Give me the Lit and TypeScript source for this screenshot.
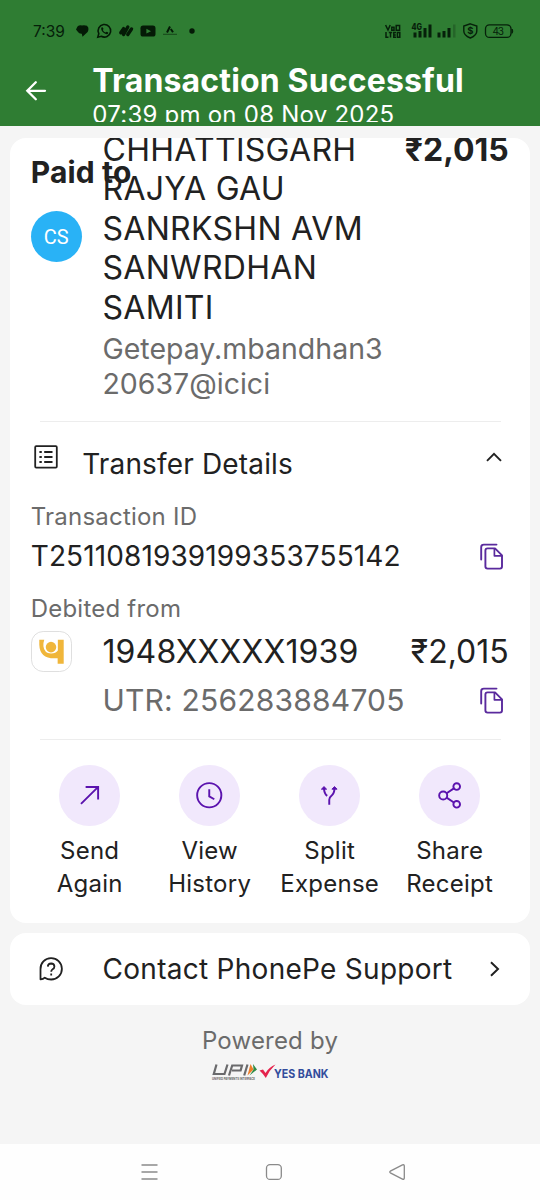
import { LitElement, html, svg, css } from "lit";
import { customElement } from "lit/decorators.js";

const copyIcon = html`<svg class="copy" width="24" height="28" viewBox="0 0 24 28" fill="none" stroke="#5a2a9d" stroke-width="1.9" stroke-linecap="round" stroke-linejoin="round">
  <path d="M1.2 16.500V4.200Q1.200 1.600 3.800 1.600H16.500"/>
  <path d="M7.600 5.400H15L22 12.400V23.600Q22 25.600 20 25.600H7.600Q5.400 25.600 5.400 23.600V7.400Q5.400 5.400 7.600 5.400Z"/>
  <path d="M14.400 5.800V12.800H21.600" stroke-width="1.7"/>
</svg>`;

const actions = [
  {
    lines: ["Send", "Again"],
    icon: svg`<path d="M21.800 38.600L38.600 22M26.400 21.800H38.800V34.200"/>`,
  },
  {
    lines: ["View", "History"],
    icon: svg`<circle cx="30" cy="30" r="12"/><path d="M30 24V31.200L35 34"/>`,
  },
  {
    lines: ["Split", "Expense"],
    icon: svg`<path d="M30 39.500V34.500Q30 32 32.400 30.200Q35.200 28 35.200 22.500M28 30.600Q24.800 28.500 24.800 22.500"/><path fill="#5b13ae" stroke-width=".9" d="M22.200 24L24.800 21.400L27.400 24ZM32.600 24L35.200 21.400L37.800 24Z"/>`,
  },
  {
    lines: ["Share", "Receipt"],
    icon: svg`<circle cx="24" cy="30.200" r="4"/><circle cx="37.400" cy="21.400" r="3.300"/><circle cx="37.400" cy="39" r="3.300"/><path d="M27.400 28L34.600 23.200M27.400 32.400L34.600 37.200"/>`,
  },
];

@customElement("app-root")
export class AppRoot extends LitElement {
  static styles = css`
    :host { display: block; font-family: Inter, Roboto, sans-serif; color: #212121; }
    * { box-sizing: border-box; }
    svg { display: block; flex: none; }
    .screen { width: 540px; height: 1200px; background: #f5f5f5; display: flex; flex-direction: column; overflow: hidden; white-space: nowrap; }
    .head { height: 126px; background: #2f7d33; flex: none; display: flex; flex-direction: column; color: #fff; }
    .status { height: 62px; padding: 20px 26px 0 33px; display: flex; justify-content: space-between; color: #06200a; }
    .status-left, .status-right { display: flex; height: 22px; align-items: center; }
    .time { font-size: 15.5px; width: 43px; }
    .bar { display: flex; padding-left: 25px; height: 60px; overflow: hidden; }
    .back { margin-top: 18px; }
    .titles { padding-left: 45.3px; }
    .title { font-size: 32px; line-height: 36px; font-weight: 700; letter-spacing: 0.15px; margin-top: 1px; }
    .date { font-size: 24px; line-height: 34px; margin-top: -1.5px; letter-spacing: 0.24px; }
    .card { background: #fff; border-radius: 16px; margin: 0 10px; overflow: hidden; flex: none; }
    .main { margin-top: 12px; height: 785px; padding: 0 21.3px 0 20.7px; display: flex; flex-direction: column; }
    .payee { display: grid; grid-template-columns: 71.8px 1fr auto; height: 283px; flex: none; }
    .paid { font-size: 30px; line-height: 36px; font-weight: 700; width: 72px; margin-top: 16px; letter-spacing: 0.15px; }
    .avatar { width: 51px; height: 51px; border-radius: 50%; background: #29b2f6; color: #fff; font: 20px Roboto, sans-serif; display: flex; align-items: center; justify-content: center; margin-top: 21px; }
    .who { margin-top: -8.5px; }
    .name { font-size: 32px; line-height: 39.5px; letter-spacing: 0.3px; }
    .vpa { font-size: 28.5px; line-height: 34.5px; color: #6b6b6b; margin-top: 5px; }
    .amount { font-size: 32px; line-height: 39.5px; font-weight: 700; margin-top: -8.5px; }
    .rule { height: 1px; background: #ededed; margin: 0 8px 0 9px; flex: none; }
    .row { display: flex; justify-content: space-between; align-items: center; }
    .section { height: 81px; align-items: flex-start; padding: 23px 0 0 3px; flex: none; }
    .section-name { font-size: 28px; line-height: 36px; flex: 1; margin: 1px 0 0 24.5px; letter-spacing: 0.16px; }
    .up { margin: 6.5px 7px 0 0; }
    .label { font-size: 24px; line-height: 28px; color: #6b6b6b; letter-spacing: 0.22px; }
    .txn { font-size: 28px; line-height: 36px; height: 50px; letter-spacing: 0.12px; }
    .copy { margin: 1px 4.700px 0 0; }
    .debited { margin-top: 14px; }
    .account { font-size: 32px; line-height: 40px; height: 44px; margin-top: 7px; }
    .bank { width: 71.8px; margin-top: -2px; }
    .number { flex: 1; letter-spacing: 0.12px; }
    .utr { font-size: 30px; line-height: 40px; color: #6b6b6b; padding-left: 71.8px; height: 52px; margin-bottom: 13px; letter-spacing: 0.2px; }
    .actions { display: grid; grid-template-columns: repeat(4, 120px); margin: 25px -1px 0 -1px; }
    .action { display: flex; flex-direction: column; align-items: center; font-size: 24px; line-height: 33px; text-align: center; letter-spacing: 0.25px; }
    .round { width: 60.5px; height: 60.5px; border-radius: 50%; background: #f1e8fc; margin-bottom: 8.5px; }
    .support { height: 72px; margin-top: 10px; padding: 0 28px 0 29px; display: flex; align-items: center; }
    .support-text { font-size: 28px; line-height: 36px; margin: 0 0 0 39.500px; flex: 1; letter-spacing: 0.28px; }
    .powered { font-size: 24px; line-height: 30px; color: #6b6b6b; text-align: center; margin-top: 21px; letter-spacing: 0.2px; }
    .logos { display: flex; justify-content: center; margin-top: 4px; }
    .nav { margin-top: auto; height: 56px; background: #fefefe; flex: none; display: flex; justify-content: center; align-items: center; }
  `;

  render() {
    return html`<div class="screen">
      <div class="head">
        <div class="status">
          <div class="status-left">
            <div class="time">7:39</div>
            <svg width="124" height="22" viewBox="0 0 124 22" fill="#041a06">
              <path d="M1.500 6.500Q3 5 6 5.400Q9 5 11 5.800Q13 7.500 12.400 10Q12 12.500 10 13.600L6.500 16.800L5.800 13.800Q3 14 2 12L0 9.500Z"/>
              <path fill="none" stroke="#041a06" stroke-width="1.600" d="M21.800 17.200L22.800 13.700A6.300 6.300 0 1 1 25.300 16.300Z"/>
              <path d="M25.400 7.600Q26.600 6.800 27.400 8.600Q27.600 9.400 26.800 10Q27.800 12 29.700 12.600Q30.600 11.400 31.400 12Q33 12.800 32 13.800Q30.400 15 27.600 12.800Q24.400 10.200 25.400 7.600Z"/>
              <path fill="none" stroke="#041a06" stroke-width="3.400" stroke-linecap="round" d="M44.800 12.800L47.600 8.600M47.600 14.500L51.800 7M51.800 14.500L55.500 9"/>
              <rect x="64.500" y="5.600" width="15" height="11" rx="2.600"/>
              <path fill="#2f7d33" d="M70.400 8.800L75 11.200L70.400 13.600Z"/>
              <path fill="none" stroke="#041a06" stroke-width="2" d="M91 12.500L94 6.500M94.800 9L97 12.300"/>
              <path fill="none" stroke="#041a06" stroke-width=".8" opacity=".7" d="M87 14.300H101"/>
              <circle cx="116" cy="11" r="2.700"/>
            </svg>
          </div>
          <div class="status-right">
            <svg width="129" height="22" viewBox="0 0 129 22" fill="#06200a" font-family="Inter" font-weight="800">
              <g fill="none" stroke="#06200a" stroke-width="1.500"><path d="M.6 5L3 10L5.200 5M6.800 7.200H9V10.200H6.800ZM11.200 5.400H14.600V10.200H11.200ZM1 12V17.200H3.500M3.800 12.600H7.200M5.500 12.600V17.500M11 12.600H8.800V17.200H11M8.800 14.900H10.800M12.400 12.600H14.800V17.200H12.400Z"/></g>
              <text x="26.500" y="9.800" font-size="8.600" textLength="10.500" lengthAdjust="spacingAndGlyphs">4G</text>
              <path d="M28.500 12.500h3v5h-3zM33.500 11h3v6.500h-3zM38.500 8h3v9.500h-3zM43.500 4.500h3v13h-3zM52.500 12.500h3v5h-3zM57.500 11h3v6.500h-3zM62.500 8h3v9.500h-3z"/>
              <path opacity=".25" d="M68 4.500h2.500v13H68z"/>
              <path fill="none" stroke="#06200a" stroke-width="1.400" d="M85.300 3.800L91.800 6V11Q91.800 15.500 85.300 18Q78.800 15.500 78.800 11V6Z"/>
              <text x="82.200" y="14.300" font-size="9.500" font-weight="700">$</text>
              <rect x="100.500" y="4.800" width="25.500" height="12.600" rx="4" fill="none" stroke="#06200a" stroke-width="1.300"/>
              <path d="M127 9Q128.600 11 127 13.300Z" stroke="#06200a"/>
              <text x="107.500" y="14.700" font-size="10" font-weight="400" textLength="11.500">43</text>
            </svg>
          </div>
        </div>
        <div class="bar">
          <svg class="back" width="22" height="22" viewBox="0 0 22 22" fill="none" stroke="#fff" stroke-width="2.300" stroke-linecap="round"><path d="M20 10.800H2.500M10.800 2.300L2.300 10.800L10.800 19.300"/></svg>
          <div class="titles">
            <div class="title">Transaction Successful</div>
            <div class="date">07:39 pm on 08 Nov 2025</div>
          </div>
        </div>
      </div>

      <div class="card main">
        <div class="payee">
          <div>
            <div class="paid">Paid to</div>
            <div class="avatar">CS</div>
          </div>
          <div class="who">
            <div class="name">CHHATTISGARH<br />RAJYA GAU<br />SANRKSHN AVM<br />SANWRDHAN<br />SAMITI</div>
            <div class="vpa">Getepay.mbandhan3<br />20637@icici</div>
          </div>
          <div class="amount">₹2,015</div>
        </div>
        <div class="rule"></div>
        <div class="row section">
          <svg width="24" height="24" viewBox="0 0 24 24" fill="none" stroke="#212121" stroke-width="1.800"><rect x="1.200" y="1.200" width="21.600" height="21.400" rx="1"/><path d="M10.200 7H18.500M10.200 12H18.500M10.200 17H18.500M5.400 7H7.800M5.400 12H7.800M5.400 17H7.800"/></svg>
          <div class="section-name">Transfer Details</div>
          <svg class="up" width="16" height="10" viewBox="0 0 16 10" fill="none" stroke="#212121" stroke-width="1.900"><path d="M1 8.800L8 1.800L15 8.800"/></svg>
        </div>
        <div class="label">Transaction ID</div>
        <div class="row txn"><span>T2511081939199353755142</span>${copyIcon}</div>
        <div class="label debited">Debited from</div>
        <div class="row account">
          <div class="bank">
            <svg width="41" height="41" viewBox="0 0 42 42"><rect x=".5" y=".5" width="41" height="41" rx="12" fill="#fff" stroke="#dedede"/><g fill="#f0b63a"><path d="M8.500 9H13.600Q12.500 12 12.700 15.500Q13.500 22.600 20.500 23Q25.500 23 27.500 20V9H33.500V33.500H27.300V27.800Q9 29.500 8.500 14Z"/><circle cx="20.500" cy="16.500" r="5.400"/></g></svg>
          </div>
          <div class="number">1948XXXXX1939</div>
          <div class="paidout">₹2,015</div>
        </div>
        <div class="row utr"><span>UTR: 256283884705</span>${copyIcon}</div>
        <div class="rule"></div>
        <div class="actions">
          ${actions.map(
            (a) => html`<div class="action">
              <svg class="round" viewBox="0 0 60 60" fill="none" stroke="#5b13ae" stroke-width="1.900">${a.icon}</svg>
              <div>${a.lines[0]}<br />${a.lines[1]}</div>
            </div>`
          )}
        </div>
      </div>

      <div class="card support">
        <svg width="24" height="24" viewBox="0 0 24 24" fill="none" stroke="#212121" stroke-width="1.800"><path d="M1.500 22.300V12.200A10.700 10.700 0 1 1 12.200 22.500Q8.500 22.500 5.800 20.700Q4 22.400 1.500 22.300Z" stroke-linejoin="round"/><path d="M8.800 9.600Q9 6.500 12.200 6.500Q15.300 6.600 15.400 9.400Q15.400 11.200 13.600 12.200Q12.200 13 12.200 14.800M12.200 16.500V18.500"/></svg>
        <div class="support-text">Contact PhonePe Support</div>
        <svg width="14" height="16" viewBox="0 0 14 16" fill="none" stroke="#212121" stroke-width="2"><path d="M3 1.200L10 8L3 14.800"/></svg>
      </div>

      <div class="powered">Powered by</div>
      <div class="logos">
        <svg width="118" height="24" viewBox="0 0 118 24" font-family="Inter, sans-serif">
          <g fill="none" stroke="#6a6a6c" stroke-width="2.200"><path d="M5.500 4.500L2.800 14H13.500L16.500 4.500M18 15.500L21.200 5.500H31L29.600 10.500H21M36.500 4.500L33.200 15.500"/></g>
          <path fill="#ef7d28" d="M39.500 4L42.500 9.500L36.500 15.500Z"/><path fill="#2f8b45" d="M42 4L46 9.500L38.500 15.500L42.500 9.500Z"/>
          <text x="1" y="19.600" font-size="3.600" font-weight="700" fill="#666" textLength="43" lengthAdjust="spacingAndGlyphs">UNIFIED PAYMENTS INTERFACE</text>
          <path fill="#e5234d" d="M48.500 10.500L52 9.500L54.500 13Q58 7 64.500 4.500Q58.500 10 54.800 18Q52 13.500 48.500 10.500Z"/>
          <text x="63" y="17.700" font-size="11.500" font-weight="700" fill="#324c9c" textLength="54.500" lengthAdjust="spacingAndGlyphs">YES BANK</text>
        </svg>
      </div>

      <div class="nav">
        <svg width="272" height="20" viewBox="0 0 272 20" fill="none" stroke="#8a8a8a" stroke-width="1.300"><path d="M7.500 3H23.500M7.500 10H23.500M7.500 17H23.500"/><rect x="132.500" y="2.600" width="14.800" height="14.800" rx="3.500"/><path stroke-linejoin="round" d="M256.300 9.200L268.500 2.900Q270.300 2.300 270.300 4V16Q270.300 17.700 268.500 17.100L256.300 10.800Q255.300 10 256.300 9.200Z"/></svg>
      </div>
    </div>`;
  }
}
